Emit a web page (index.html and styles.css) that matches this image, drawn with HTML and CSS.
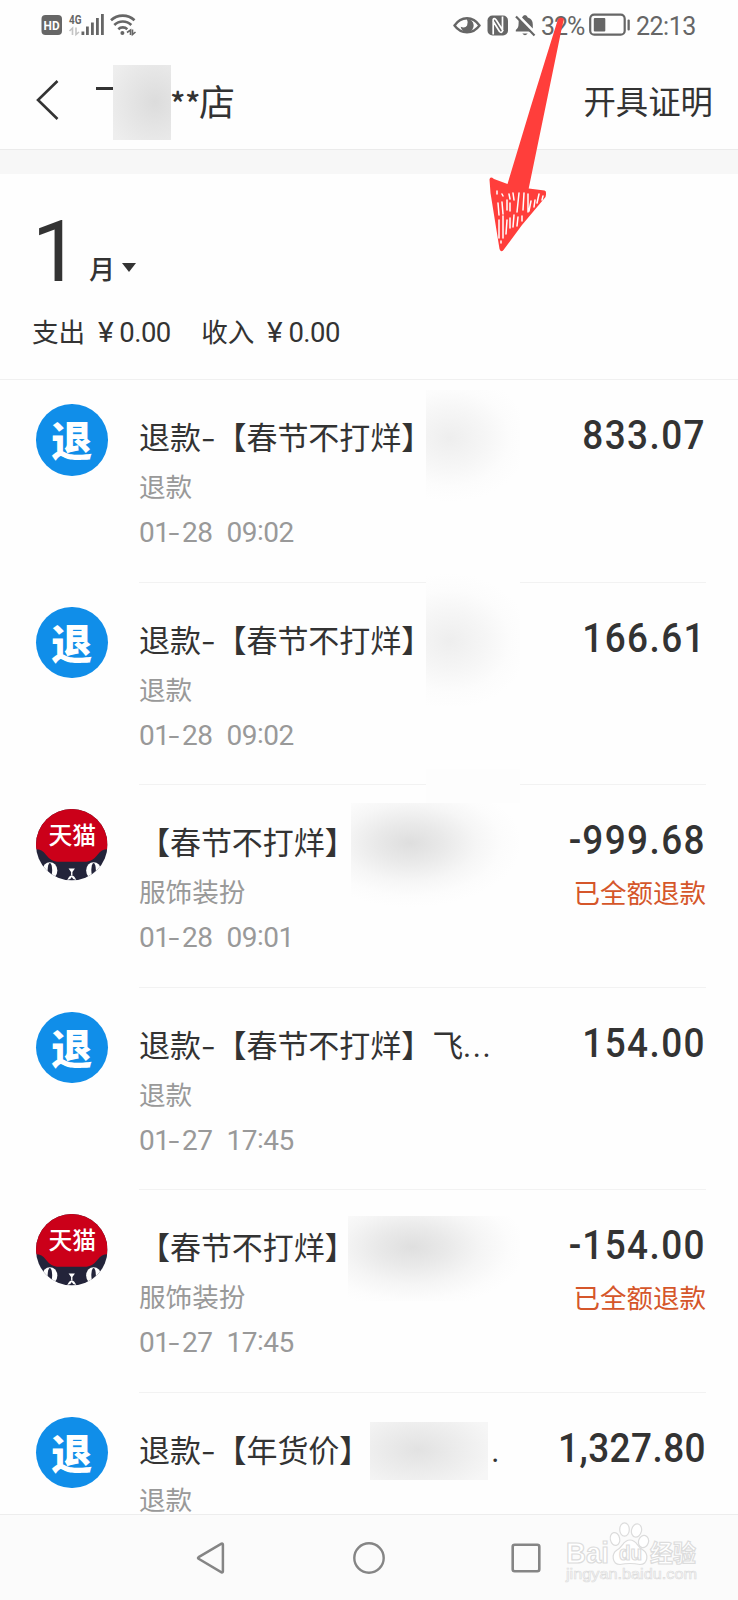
FILE: index.html
```html
<!DOCTYPE html>
<html lang="zh-CN">
<head>
<meta charset="utf-8">
<title>账单</title>
<link rel="stylesheet" href="styles.css">
</head>
<body>
<div class="screen">
  <header class="status">
    <svg class="status-left" width="98" height="26" viewBox="0 0 98 26">
      <rect x="0.5" y="2" width="20.5" height="20" rx="4" fill="#666"/>
      <text class="hd" x="2.6" y="17.3" textLength="16" lengthAdjust="spacingAndGlyphs">HD</text>
      <text class="net" x="28" y="11" textLength="12.5" lengthAdjust="spacingAndGlyphs">4G</text>
      <g fill="none" stroke="#c4c4c4" stroke-width="1.6"><path d="M28.500 18l3-2.800V22M35 14.500v7l3-2.500"/></g>
      <g fill="#666"><rect x="40.5" y="18.5" width="2.8" height="3.5"/><rect x="45" y="13.5" width="2.8" height="8.5"/><rect x="50" y="9.5" width="2.8" height="12.5"/><rect x="55" y="5" width="2.8" height="17"/><rect x="60" y="1" width="2.8" height="21"/></g>
      <g fill="none" stroke="#666" stroke-width="2.600"><path d="M70 7.300a17 17 0 0 1 23.500 0"/><path d="M73.300 12a12 12 0 0 1 17 0"/><path d="M77.300 16.200a6.500 6.500 0 0 1 9 0"/></g>
      <circle cx="81.400" cy="20" r="2" fill="#666"/>
      <path d="M86 19.500l3.500-2.500v5M91.500 16.500v5l3-2.500" fill="none" stroke="#666" stroke-width="1.600"/>
    </svg>
    <div class="status-right">
      <svg width="84" height="26" viewBox="0 0 84 26">
        <path d="M1.500 12.500C8 2.800 20 2.800 26.500 12.500C20 21.500 8 21.500 1.500 12.500z" fill="none" stroke="#666" stroke-width="2.300"/>
        <path d="M13.800 6a6.600 6.600 0 1 1-6.200 7.800q4.500 2 6.500-1.300q1.500-3-.3-6.500z" fill="#666"/>
        <rect x="34.500" y="2.500" width="20.500" height="20" rx="5" fill="#666"/>
        <path d="M40.200 21.500V6.500q1-2 3 .5l7 11M49.500 3.500v14.500q-1 2.500-3 .5l-6.800-11" fill="none" stroke="#fff" stroke-width="1.700"/>
        <path d="M69 4.500q1-2.500 3-2.500t2.800 2.500q5 1.500 5 7v4zM66.500 6.500L77.800 18.500H62.800V17q2.800-2 2.800-6.500t.9-4zM69.300 20.500h5.400q-2.700 3.500-5.400 0z" fill="#666"/>
        <path d="M63 3.500L81.500 22.500" stroke="#666" stroke-width="2.200"/>
      </svg>
      <span class="percent">32%</span>
      <svg class="battery" width="42" height="24" viewBox="0 0 42 24">
        <rect x="1.200" y="1.700" width="34.500" height="20" rx="4" fill="none" stroke="#666" stroke-width="2.200"/>
        <rect x="4.800" y="5" width="11.500" height="13.500" rx="1" fill="#666"/>
        <rect x="38.500" y="6.500" width="2.300" height="11" rx="1" fill="#666"/>
      </svg>
      <span class="clock">22:13</span>
    </div>
  </header>

  <div class="titlebar">
    <svg class="back" width="24" height="40" viewBox="0 0 24 40"><path d="M21.500 1L2 20l19.500 19" fill="none" stroke="#333" stroke-width="2.600"/></svg>
    <div class="shop"><i class="stroke"></i><i class="mask-name"></i><span class="stars">**</span><span>店</span></div>
    <div class="proof">开具证明</div>
  </div>
  <div class="band"></div>

  <section class="summary">
    <div class="month"><span class="num">1</span><span class="unit">月</span><i class="caret"></i></div>
    <div class="totals"><span>支出</span><span class="yen">¥</span><span class="sum">0.00</span><span class="second">收入</span><span class="yen">¥</span><span class="sum">0.00</span></div>
  </section>

  <main class="list">
    <article class="row">
      <div class="avatar refund">退</div>
      <div class="body">
        <div class="info"><div class="title">退款<b>-</b>【春节不打烊】</div><div class="sub">退款</div><div class="date">01<b>-</b>28<s></s>09<u>:</u>02</div></div>
        <div class="side"><div class="amount">833.07</div></div>
      </div>
      <i class="mask m1"></i>
    </article>
    <article class="row">
      <div class="avatar refund">退</div>
      <div class="body">
        <div class="info"><div class="title">退款<b>-</b>【春节不打烊】</div><div class="sub">退款</div><div class="date">01<b>-</b>28<s></s>09<u>:</u>02</div></div>
        <div class="side"><div class="amount">166.61</div></div>
      </div>
      <i class="mask m2"></i>
    </article>
    <article class="row">
      <svg class="avatar" viewBox="0 0 72 72">
        <clipPath id="disc"><circle cx="36" cy="36" r="36"/></clipPath>
        <g id="tmall" clip-path="url(#disc)">
          <rect width="72" height="72" fill="#23243a"/>
          <path d="M0 0H72V40.500Q66 40.500 62 46Q57 52.500 51 53H21Q15 52.500 10 46Q6 40.500 0 40.500z" fill="#cb0019"/>
          <ellipse cx="14" cy="62" rx="7.500" ry="8.500" fill="#fff"/><ellipse cx="58" cy="62" rx="7.500" ry="8.500" fill="#fff"/>
          <ellipse cx="14" cy="61.500" rx="2.300" ry="7" fill="#23243a"/><ellipse cx="58" cy="61.500" rx="2.300" ry="7" fill="#23243a"/>
          <path d="M32.800 60h6.400L36 64.500zM35.300 63h1.400v4h-1.400z" fill="#fff"/>
          <path d="M31.500 71.500q2-4.500 4.500-4.500t4.500 4.500l-3-1-1.500-2-1.500 2z" fill="#fff"/>
          <text class="brand" x="12.500" y="35" textLength="48">天猫</text>
        </g>
      </svg>
      <div class="body">
        <div class="info"><div class="title">【春节不打烊】</div><div class="sub">服饰装扮</div><div class="date">01<b>-</b>28<s></s>09<u>:</u>01</div></div>
        <div class="side"><div class="amount"><em>-</em>999.68</div><div class="state">已全额退款</div></div>
      </div>
      <i class="mask m3a"></i><i class="mask m3"></i>
    </article>
    <article class="row">
      <div class="avatar refund">退</div>
      <div class="body">
        <div class="info"><div class="title">退款<b>-</b>【春节不打烊】飞<span class="dots">...</span></div><div class="sub">退款</div><div class="date">01<b>-</b>27<s></s>17<u>:</u>45</div></div>
        <div class="side"><div class="amount">154.00</div></div>
      </div>
    </article>
    <article class="row">
      <svg class="avatar" viewBox="0 0 72 72"><use href="#tmall"/></svg>
      <div class="body">
        <div class="info"><div class="title">【春节不打烊】</div><div class="sub">服饰装扮</div><div class="date">01<b>-</b>27<s></s>17<u>:</u>45</div></div>
        <div class="side"><div class="amount"><em>-</em>154.00</div><div class="state">已全额退款</div></div>
      </div>
      <i class="mask m5"></i>
    </article>
    <article class="row">
      <div class="avatar refund">退</div>
      <div class="body">
        <div class="info"><div class="title">退款<b>-</b>【年货价】<span class="tail">.</span></div><div class="sub">退款</div></div>
        <div class="side"><div class="amount long">1,327.80</div></div>
      </div>
      <i class="mask m6"></i>
    </article>
  </main>

  <footer class="nav">
    <svg width="30" height="34" viewBox="0 0 30 34"><path d="M2.600 16.200L25.500 2.700q1.400-.6 1.400 1V30.300q0 1.600-1.400 1L2.600 17.800q-1.200-.8 0-1.600z" fill="none" stroke="#858585" stroke-width="2.500"/></svg>
    <svg width="34" height="34" viewBox="0 0 34 34"><circle cx="17" cy="17" r="14.700" fill="none" stroke="#858585" stroke-width="2.400"/></svg>
    <svg width="30" height="30" viewBox="0 0 30 30"><rect x="1.700" y="1.700" width="26.600" height="26.600" rx="2" fill="none" stroke="#858585" stroke-width="2.600"/></svg>
    <svg class="watermark" width="136" height="68" viewBox="0 0 136 68">
      <g fill="#fff" stroke="#dcdcdc" stroke-width="1.200">
        <text class="wm" x="3" y="41" font-size="29" textLength="43" lengthAdjust="spacingAndGlyphs">Bai</text>
        <path d="M67 18C74 18 74 25 80 28C86 32 85 42 77 42.500Q67 40.500 57 42.500C49 42 48 32 54 28C60 25 60 18 67 18z"/>
        <ellipse cx="52" cy="17" rx="4.700" ry="6.500" transform="rotate(-12 52 17)"/><ellipse cx="61.500" cy="7.500" rx="4.800" ry="6.700"/><ellipse cx="73.500" cy="8.500" rx="5" ry="6.700" transform="rotate(14 73.500 8.500)"/><ellipse cx="80.500" cy="19.500" rx="5" ry="6.200" transform="rotate(18 80.500 19.500)"/>
        <text class="wm" x="56" y="38" font-size="20" textLength="23" lengthAdjust="spacingAndGlyphs">du</text>
        <text class="wm cn" x="87" y="40" font-size="24" textLength="46" lengthAdjust="spacingAndGlyphs">经验</text>
        <text class="wm url" x="3" y="57" font-size="15.500" stroke-width=".7" textLength="131" lengthAdjust="spacingAndGlyphs">jingyan.baidu.com</text>
      </g>
    </svg>
  </footer>

  <svg class="arrow" width="76" height="240" viewBox="0 0 76 240">
    <path d="M73 7Q76 4 79 7L77 15L43.700 176.500L59.500 178.500Q62 179 60.500 185L37 213L18.500 238Q16 241 14.500 237L5.500 181L4.500 167.500Q5 164 9 167L22.500 172L46 94z" fill="#ff3e3b" transform="translate(-4 0)"/>
    <g stroke="#fff" stroke-width="1.500" stroke-linecap="round" fill="none">
      <path d="M8 179v3M13 182l1 2M20 182l1 5M24 181l1 7M9 191l1 12M13 190l1 12M18 188v10M30 181l-2 19M35 181l-1 17M39 182v18M42 189l-2 10M46 188l-1 7M50 182l-2 9M54 184l-1 4M10 208v18M14 204v22M18 208l-1 14M21 206v10M25 203l-1 12M29 205l-1 9M33 204v5M21 191v8M12 229v2"/>
    </g>
  </svg>
</div>
</body>
</html>
```
FILE: styles.css
```css
* { box-sizing: border-box; }
body { margin: 0; background: #fff; font-family: "Noto Sans CJK SC", sans-serif; color: #333; }
i, b, s, u, em { font-style: normal; font-weight: inherit; text-decoration: none; }
svg { display: block; flex: none; }
.screen { position: relative; width: 738px; height: 1600px; display: flex; flex-direction: column; overflow: hidden; background: #fefefe; }

.status { height: 50px; flex: none; display: flex; align-items: flex-start; justify-content: space-between; padding: 13px 42px 0 41px; color: #666; }
.status-left { overflow: visible; }
.hd { font: bold 12.5px Roboto, sans-serif; fill: #fff; }
.net { font: bold 12.5px Roboto, sans-serif; fill: #666; }
.status-right { display: flex; align-items: flex-start; font: 400 25px/28px Roboto, sans-serif; }
.percent { width: 44px; margin-left: 4px; letter-spacing: -1px; white-space: nowrap; }
.battery { margin-left: 4px; }
.clock { width: 60px; margin-left: 5px; letter-spacing: -0.500px; white-space: nowrap; }

.titlebar { height: 99px; flex: none; display: flex; align-items: flex-start; padding: 15px 25px 0 36px; }
.back { margin-top: 15px; }
.shop { margin-left: 36px; display: flex; flex: 1; font-size: 36px; line-height: 70px; }
.stroke { width: 17px; height: 3px; margin-top: 22px; background: #333; }
.mask-name { width: 58px; height: 75px; background: radial-gradient(ellipse 50px 55px at 42px 37px, #dcdcdc, #eeeeee); }
.stars { width: 29px; margin-left: -1px; font-size: 32px; font-weight: 500; line-height: 74px; letter-spacing: -0.5px; }
.proof { font-size: 32.400px; line-height: 69px; }
.band { height: 25px; flex: none; background: #f7f7f7; border-top: 1px solid #ebebeb; }

.summary { height: 206px; flex: none; padding: 34px 32px 0; border-bottom: 1px solid #f0f0f0; }
.month { display: flex; align-items: flex-end; height: 78px; }
.num { position: relative; top: 9px; width: 57px; font: 400 85px/86px Roboto, sans-serif; }
.unit { font-size: 26px; font-weight: 500; line-height: 36px; }
.caret { margin: 0 0 14px 7px; border: 7px solid transparent; border-top: 9px solid #333; border-bottom: 0; }
.totals { display: flex; margin-top: 25px; font-size: 26.600px; line-height: 40px; }
.yen { width: 21px; margin-left: 13px; font: 27px/44px Roboto, sans-serif; transform: scaleX(1.100); transform-origin: 0 50%; }
.sum { width: 53px; font: 27.500px/44px Roboto, sans-serif; letter-spacing: -0.5px; }
.second { margin-left: 29px; }

.list { height: 1134px; flex: none; overflow: hidden; }
.row { position: relative; height: 202.600px; display: flex; padding: 0 32px 0 36px; }
.avatar { width: 71.500px; height: 71.500px; margin: 24px 31.500px 0 0; flex: none; }
.refund { border-radius: 50%; background: #108ee9; color: #fff; font-size: 41px; font-weight: 900; line-height: 68px; text-align: center; }
.brand { font: 500 24px "Noto Sans CJK SC", sans-serif; fill: #fff; }
.body { flex: 1; display: flex; justify-content: space-between; border-bottom: 1.500px solid #f2f2f2; }
.info { width: 360px; flex: none; padding-top: 34px; white-space: nowrap; }
.title { height: 44px; font-size: 31px; line-height: 44px; letter-spacing: -0.050px; }
.title b { display: inline-block; width: 14.600px; transform: scaleX(1.350); transform-origin: 0 50%; }
.sub { margin-top: 9px; height: 36px; font-size: 26.600px; line-height: 38px; color: #999; }
.date { margin-top: 9px; font: 28px/42px Roboto, sans-serif; letter-spacing: -0.5px; color: #999; }
.date b { display: inline-block; width: 12.500px; transform: scaleX(1.400); transform-origin: 10% 50%; }
.date s { display: inline-block; width: 14px; }
.date u { position: relative; top: -2px; }
.dots { font-family: Roboto, sans-serif; letter-spacing: 1.500px; }
.tail { margin-left: 121px; font-family: Roboto, sans-serif; }
.side { width: 200px; flex: none; padding: 32px 0 0; text-align: right; white-space: nowrap; }
.amount { font: 500 41px/46px Roboto, sans-serif; letter-spacing: 1.600px; transform: scaleX(.9); transform-origin: 100% 50%; }
.amount em { display: inline-block; width: 15px; text-align: left; }
.long { letter-spacing: .500px; }
.state { margin-top: 9px; font-size: 26.500px; line-height: 40px; color: #d5562a; }

.mask { position: absolute; }
.m1 { left: 426px; top: 10px; width: 94px; height: 112px; background: radial-gradient(ellipse 80px 64px at 24px 48px, #eee, #f6f6f6 45%, #fcfcfc 75%, #fefefe); }
.m2 { left: 426px; top: -16px; width: 94px; height: 139px; background: radial-gradient(ellipse 80px 68px at 24px 74px, #eee, #f6f6f6 45%, #fcfcfc 75%, #fefefe); }
.m3 { left: 351px; top: 18px; width: 169px; height: 104px; background: radial-gradient(ellipse 112px 64px at 59px 40px, #dedede, #e9e9e9 30%, #f6f6f6 60%, #fcfcfc 82%, #fefefe); }
.m3a { left: 426px; top: -16px; width: 94px; height: 36px; background: #fdfdfd; }
.m5 { left: 348px; top: 26px; width: 172px; height: 85px; background: radial-gradient(ellipse 115px 62px at 64px 31px, #dfdfdf, #e9e9e9 30%, #f5f5f5 60%, #fcfcfc 85%, #fefefe); }
.m6 { left: 370px; top: 29px; width: 118px; height: 58px; background: radial-gradient(ellipse 78px 45px at 48px 28px, #e2e2e2, #f6f6f6); }

.nav { flex: 1; display: flex; align-items: center; padding-left: 196px; background: #fbfbfb; border-top: 1px solid #ededed; }
.nav svg:nth-child(2) { margin-left: 126px; }
.nav svg:nth-child(3) { margin-left: 125px; }
.watermark { margin: -4px 0 0 22px; }
.wm { font-family: "Liberation Sans", sans-serif; font-weight: bold; }
.url { font-weight: normal; }
.cn { font-family: "Noto Sans CJK SC", sans-serif; }
.arrow { position: absolute; left: 489px; top: 12px; }
```
